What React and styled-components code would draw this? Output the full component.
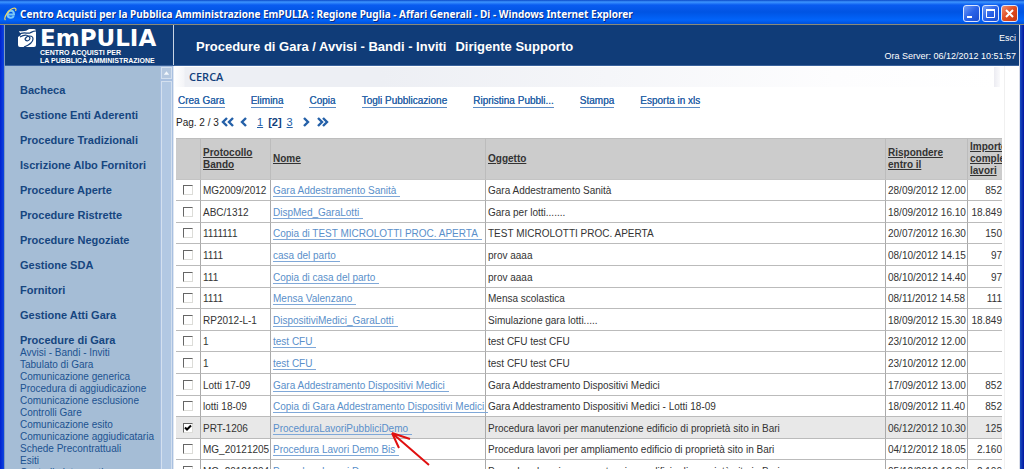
import styled, { createGlobalStyle } from 'styled-components';

const GlobalStyle = createGlobalStyle`
  * {
    box-sizing: border-box;
  }

  body {
    margin: 0;
    font-family: 'Liberation Sans', Arial, sans-serif;
    font-size: 10px;
    color: #333;
    background: #fff;
  }
`;

const Window = styled.div`
  height: 100vh;
  display: flex;
  flex-direction: column;
  overflow: hidden;
  background: linear-gradient(90deg, #0022d0, #0d45e0 4px, #1b4fc0 calc(100% - 4px), #0014a0);
`;

const TitleBar = styled.div`
  flex: none;
  height: 25px;
  display: flex;
  align-items: center;
  gap: 3px;
  padding: 3px 6px 0 4px;
  border-bottom: 1px solid #8a8a78;
  background: linear-gradient(#0a48c8, #3d95ff 2px, #0a5cf0 5px, #0054e3 12px, #0264fa 20px, #0050d8);
`;

const WindowTitle = styled.h1`
  flex: 1;
  margin: 0;
  font: bold 10px/16px 'Noto Sans', sans-serif;
  color: #fff;
  text-shadow: 1px 1px #0a2a80;
  white-space: nowrap;
`;

const WindowButtons = styled.div`
  display: flex;
  gap: 2px;
`;

const WindowButton = styled.button`
  width: 17px;
  height: 17px;
  padding: 0;
  display: flex;
  border: 1px solid #dbe6ff;
  border-radius: 3px;
  background: ${(p) => (p.$close ? 'linear-gradient(135deg, #f09070, #e04a20 50%, #c83810)' : 'linear-gradient(135deg, #6f9cf8, #2a62e8 50%, #1a4cd0)')};
`;

const Page = styled.div`
  flex: 1;
  min-height: 0;
  margin: 0 4px;
  display: flex;
  flex-direction: column;
  border-left: 1px solid #7e9cc0;
  border-right: 1px solid #d8dce8;
  background: #fff;
`;

const Header = styled.header`
  flex: none;
  height: 41px;
  display: flex;
  background: #103c78;
  border-bottom: 1px solid #3a629c;
  color: #fff;
`;

const Brand = styled.div`
  width: 169px;
  display: flex;
  gap: 4px;
  padding: 4px 0 0 13px;
  border-right: 1px solid #c8d4e4;
`;

const BrandName = styled.div`
  font: bold 23px/18px 'DejaVu Sans', sans-serif;
`;

const BrandTagline = styled.div`
  margin-top: 2px;
  font-size: 7px;
  font-weight: bold;
  line-height: 8px;
  white-space: nowrap;
`;

const PageTitle = styled.h2`
  flex: 1;
  display: flex;
  gap: 9px;
  margin: 0;
  padding: 14px 0 0 22px;
  font-size: 13px;
  line-height: 16px;
  white-space: nowrap;
`;

const Session = styled.div`
  display: flex;
  flex-direction: column;
  align-items: flex-end;
  gap: 6px;
  padding: 7px 3px 0 0;
  font-size: 9px;
  line-height: 12px;

  a {
    color: #fff;
    text-decoration: none;
  }
`;

const Body = styled.div`
  flex: 1;
  min-height: 0;
  display: flex;
`;

const Sidebar = styled.nav`
  width: 155px;
  flex: none;
  overflow: hidden;
  padding: 12px 0 0 15px;
  background: #a5bdd6;
`;

const MenuLink = styled.a`
  display: block;
  font-size: 11px;
  font-weight: bold;
  line-height: 25px;
  color: #164680;
  text-decoration: none;
  white-space: nowrap;
`;

const SubMenu = styled.ul`
  list-style: none;
  margin: 0;
  margin-top: -6px;
  padding: 0;
`;

const SubLink = styled.a`
  display: block;
  line-height: 12px;
  color: #1c5290;
  text-decoration: none;
  white-space: nowrap;
`;

const ScrollTrack = styled.div`
  width: 14px;
  flex: none;
  display: flex;
  flex-direction: column;
  gap: 2px;
  padding: 1px 1px 0;
  background: #a9c0e0;
  border-right: 1px solid #dfe7f2;
`;

const ScrollButton = styled.button`
  height: 12px;
  padding: 0;
  display: flex;
  border: 1px solid #d4e0ef;
  background: #b5c8e0;
`;

const ScrollThumb = styled.div`
  flex: 1;
  border: 1px solid #d4e0ef;
  border-bottom: 0;
  background: #b2c8e3;
`;

const Main = styled.main`
  flex: 1;
  min-width: 0;
  margin-right: 14px;
  overflow: hidden;
  border-right: 1px solid #f0f0f0;
`;

const SearchBar = styled.div`
  height: 20px;
  margin: 1px 4px 0 0;
  padding-left: 11px;
  display: flex;
  justify-content: space-between;
  background: linear-gradient(90deg, #fff, #f4f5f8 10px, #edeff4 11px, #edeff4 25%, #fdfdfe 80%, #fff);
`;

const SearchTitle = styled.h3`
  margin: 0;
  padding-left: 4px;
  font: 600 11px/20px 'Open Sans', sans-serif;
  color: #123f7c;
`;

const SearchEdge = styled.span`
  width: 6px;
  background: linear-gradient(90deg, #ececf2, #fafafc);
`;

const Toolbar = styled.div`
  display: flex;
  gap: 26px;
  padding: 7px 0 0 4px;
`;

const ToolLink = styled.a`
  line-height: 13px;
  color: #2c65a8;
  text-shadow: 0 0 currentColor;
  text-decoration: none;
  border-bottom: 1px solid #5d8cc4;
  white-space: nowrap;
`;

const Pager = styled.div`
  display: flex;
  align-items: center;
  height: 16px;
  margin: 6px 0 8px;
  padding-left: 2px;
  color: #222;

  a {
    display: flex;
    color: #2460a8;
  }
`;

const PageCount = styled.span`
  width: 45px;
`;

const PageNumbers = styled.span`
  display: flex;
  gap: 5px;
  margin: 0 9px;
  font-size: 11px;

  a {
    text-decoration: underline;
  }

  strong {
    color: #123f7c;
  }
`;

const PageArrows = styled.span`
  display: flex;
  gap: 6px;
`;

const Table = styled.table`
  width: calc(100% - 4px);
  margin-left: 2px;
  table-layout: fixed;
  border-collapse: separate;
  border-spacing: 0;
  line-height: 12px;
  white-space: nowrap;
`;

const HeadCell = styled.th`
  height: 42px;
  padding: 0 0 0 2px;
  overflow: hidden;
  text-align: left;
  text-decoration: underline;
  background: #ccc;
  border-top: 1px solid #bdbdbd;
  border-bottom: 1px solid #c4c4c4;

  & + & {
    border-left: 1px solid #bcbcbc;
  }
`;

const Row = styled.tr`
  height: 22px;
  background: ${(p) => (p.$selected ? '#e8e8e8' : '#fff')};

  &:nth-child(5n + 1),
  &:nth-child(5n + 3) {
    height: 21px;
  }
`;

const Cell = styled.td`
  padding: 2px 0 0 2px;
  border-bottom: 1px solid #bbb;
  text-align: ${(p) => p.$align || 'left'};

  & + & {
    border-left: 1px solid #aaa;
  }
`;

const Checkbox = styled.input`
  appearance: none;
  display: block;
  width: 10px;
  height: 10px;
  margin: 0 0 2px 5px;
  border: 1px solid;
  border-color: #666 #dcdcd8 #dcdcd8 #666;
  background: #fff;

  &:checked {
    background: #fff url("data:image/svg+xml,%3Csvg xmlns='http://www.w3.org/2000/svg' viewBox='0 0 8 8'%3E%3Cpath d='M1 3.5l2 2L7 1.500' fill='none' stroke='%23000' stroke-width='2'/%3E%3C/svg%3E");
  }
`;

const NameLink = styled.a`
  position: relative;
  padding-right: 4px;
  color: #5a8fca;
  text-decoration: none;
  border-bottom: 1px solid #7fa8d8;
`;

// hand drawn pointer lying over the selected tender
const Pointer = styled.svg`
  position: absolute;
  top: 8px;
  right: -20px;
  width: 42px;
  height: 38px;
  z-index: 1;
  pointer-events: none;
`;

const menu = [
  'Bacheca',
  'Gestione Enti Aderenti',
  'Procedure Tradizionali',
  'Iscrizione Albo Fornitori',
  'Procedure Aperte',
  'Procedure Ristrette',
  'Procedure Negoziate',
  'Gestione SDA',
  'Fornitori',
  'Gestione Atti Gara',
  'Procedure di Gara',
];

const subMenu = [
  'Avvisi - Bandi - Inviti',
  'Tabulato di Gara',
  'Comunicazione generica',
  'Procedura di aggiudicazione',
  'Comunicazione esclusione',
  'Controlli Gare',
  'Comunicazione esito',
  'Comunicazione aggiudicataria',
  'Schede Precontrattuali',
  'Esiti',
  'Controllo interventi',
];

const tools = ['Crea Gara', 'Elimina', 'Copia', 'Togli Pubblicazione', 'Ripristina Pubbli...', 'Stampa', 'Esporta in xls'];

const rows = [
  ['MG2009/2012', 'Gara Addestramento Sanità', 'Gara Addestramento Sanità', '28/09/2012 12.00', '852'],
  ['ABC/1312', 'DispMed_GaraLotti', 'Gara per lotti.......', '18/09/2012 16.10', '18.849'],
  ['1111111', 'Copia di TEST MICROLOTTI PROC. APERTA', 'TEST MICROLOTTI PROC. APERTA', '20/07/2012 16.30', '150'],
  ['1111', 'casa del parto', 'prov aaaa', '08/10/2012 14.15', '97'],
  ['111', 'Copia di casa del parto', 'prov aaaa', '08/10/2012 14.40', '97'],
  ['1111', 'Mensa Valenzano', 'Mensa scolastica', '08/11/2012 14.58', '111'],
  ['RP2012-L-1', 'DispositiviMedici_GaraLotti', 'Simulazione gara lotti.....', '18/09/2012 15.30', '18.849'],
  ['1', 'test CFU', 'test CFU test CFU', '23/10/2012 12.00', ''],
  ['1', 'test CFU', 'test CFU test CFU', '23/10/2012 12.00', ''],
  ['Lotti 17-09', 'Gara Addestramento Dispositivi Medici', 'Gara Addestramento Dispositivi Medici', '17/09/2012 13.00', '852'],
  ['lotti 18-09', 'Copia di Gara Addestramento Dispositivi Medici', 'Gara Addestramento Dispositivi Medici - Lotti 18-09', '18/09/2012 11.40', '852'],
  ['PRT-1206', 'ProceduraLavoriPubbliciDemo', 'Procedura lavori per manutenzione edificio di proprietà sito in Bari', '06/12/2012 10.30', '125'],
  ['MG_20121205', 'Procedura Lavori Demo Bis', 'Procedura lavori per ampliamento edificio di proprietà sito in Bari', '04/12/2012 18.05', '2.160'],
  ['MG_20121204', 'Procedura Lavori Demo', 'Procedura lavori per manutenzione edificio di proprietà sito in Bari', '05/12/2012 12.00', '2.100'],
];

const Chevron = ({ left, double }) => (
  <svg width={double ? 13 : 8} height="10" viewBox={double ? '0 0 13 10' : '0 0 8 10'} fill="none" stroke="currentColor" strokeWidth="2.4">
    <path d={left ? 'M6 1L2 5l4 4' : 'M2 1l4 4-4 4'} />
    {double && <path d={left ? 'M12 1L8 5l4 4' : 'M7 1l4 4-4 4'} />}
  </svg>
);

const BrowserIcon = () => (
  <svg width="13" height="14" viewBox="0 0 13 14" fill="none">
    <path d="M3.500 7.500h6.500c0-5-6-5-6.500 0 0 4 5 4 6.300 1.500" stroke="#7cc8f8" strokeWidth="2" />
    <path d="M1.500 13C-1 11 5 1.500 10.500 1c2 0 1.500 2 1 3" stroke="#f0d860" strokeWidth="1.200" />
  </svg>
);

const BrandIcon = () => (
  <svg width="18" height="19" viewBox="0 0 18 19">
    <path d="M1 2Q8 3 11 0h5q2 0 2 2v14q0 2-2 2H2q-2 0-2-2V8l3-2z" fill="#fff" />
    <path d="M0 6C5 2 9 5 12 4c2-1 3-2 6-2M2 8c5-3 9-2 10 1 0 3-4 4-5 1 2-4 8-4 8 0 0 3-4 6-9 8" stroke="#103c78" strokeWidth="1.200" fill="none" />
  </svg>
);

const App = () => {
  return (
    <>
      <GlobalStyle />
      <Window>
        <TitleBar>
          <BrowserIcon />
          <WindowTitle>
            Centro Acquisti per la Pubblica Amministrazione EmPULIA : Regione Puglia - Affari Generali - Di - Windows Internet Explorer
          </WindowTitle>
          <WindowButtons>
            <WindowButton aria-label="Riduci a icona">
              <svg viewBox="0 0 15 15"><path d="M3 11h5" stroke="#fff" strokeWidth="2" /></svg>
            </WindowButton>
            <WindowButton aria-label="Ingrandisci">
              <svg viewBox="0 0 15 15" fill="none" stroke="#fff"><path d="M3.500 3.500h8v8h-8z" /><path d="M3 4h9" strokeWidth="2" /></svg>
            </WindowButton>
            <WindowButton $close aria-label="Chiudi">
              <svg viewBox="0 0 15 15"><path d="M4 4l7 7M11 4l-7 7" stroke="#fff" strokeWidth="2" /></svg>
            </WindowButton>
          </WindowButtons>
        </TitleBar>
        <Page>
          <Header>
            <Brand>
              <BrandIcon />
              <div>
                <BrandName>EmPULIA</BrandName>
                <BrandTagline>
                  CENTRO ACQUISTI PER
                  <br />
                  LA PUBBLICA AMMINISTRAZIONE
                </BrandTagline>
              </div>
            </Brand>
            <PageTitle>
              <span>Procedure di Gara / Avvisi - Bandi - Inviti</span>
              <span>Dirigente Supporto</span>
            </PageTitle>
            <Session>
              <a href="#esci">Esci</a>
              <span>Ora Server: 06/12/2012 10:51:57</span>
            </Session>
          </Header>
          <Body>
            <Sidebar>
              {menu.map((item) => (
                <MenuLink key={item} href="#menu">{item}</MenuLink>
              ))}
              <SubMenu>
                {subMenu.map((item) => (
                  <li key={item}>
                    <SubLink href="#menu">{item}</SubLink>
                  </li>
                ))}
              </SubMenu>
            </Sidebar>
            <ScrollTrack>
              <ScrollButton aria-label="Scorri in alto">
                <svg viewBox="0 0 10 10"><path d="M2 7l3-4 3 4z" fill="#f4f8fc" /></svg>
              </ScrollButton>
              <ScrollThumb />
            </ScrollTrack>
            <Main>
              <SearchBar>
                <SearchTitle>CERCA</SearchTitle>
                <SearchEdge />
              </SearchBar>
              <Toolbar>
                {tools.map((tool) => (
                  <ToolLink key={tool} href="#azione">{tool}</ToolLink>
                ))}
              </Toolbar>
              <Pager>
                <PageCount>Pag. 2 / 3</PageCount>
                <PageArrows>
                  <a href="#prima" aria-label="Prima pagina"><Chevron left double /></a>
                  <a href="#precedente" aria-label="Pagina precedente"><Chevron left /></a>
                </PageArrows>
                <PageNumbers>
                  <a href="#1">1</a>
                  <strong>[2]</strong>
                  <a href="#3">3</a>
                </PageNumbers>
                <PageArrows>
                  <a href="#successiva" aria-label="Pagina successiva"><Chevron /></a>
                  <a href="#ultima" aria-label="Ultima pagina"><Chevron double /></a>
                </PageArrows>
              </Pager>
              <Table>
                <colgroup>
                  <col width="24" />
                  <col width="70" />
                  <col width="215" />
                  <col />
                  <col width="82" />
                  <col width="35" />
                </colgroup>
                <thead>
                  <tr>
                    <HeadCell aria-label="Seleziona" />
                    <HeadCell>Protocollo<br />Bando</HeadCell>
                    <HeadCell>Nome</HeadCell>
                    <HeadCell>Oggetto</HeadCell>
                    <HeadCell>Rispondere<br />entro il</HeadCell>
                    <HeadCell>Importo<br />complessivo<br />lavori</HeadCell>
                  </tr>
                </thead>
                <tbody>
                  {rows.map(([code, name, subject, due, amount], i) => {
                    const selected = code === 'PRT-1206';
                    return (
                      <Row key={i} $selected={selected}>
                        <Cell>
                          <Checkbox type="checkbox" defaultChecked={selected} aria-label={`Seleziona ${name}`} />
                        </Cell>
                        <Cell>{code}</Cell>
                        <Cell>
                          <NameLink href="#gara">
                            {name}
                            {selected && (
                              <Pointer viewBox="0 0 42 38" fill="none" stroke="#e01010" strokeWidth="2">
                                <path d="M2 2l37 32M2 2l18 6M2 2l7 15" />
                              </Pointer>
                            )}
                          </NameLink>
                        </Cell>
                        <Cell>{subject}</Cell>
                        <Cell>{due}</Cell>
                        <Cell $align="right">{amount}</Cell>
                      </Row>
                    );
                  })}
                </tbody>
              </Table>
            </Main>
          </Body>
        </Page>
      </Window>
    </>
  );
};

export default App;
